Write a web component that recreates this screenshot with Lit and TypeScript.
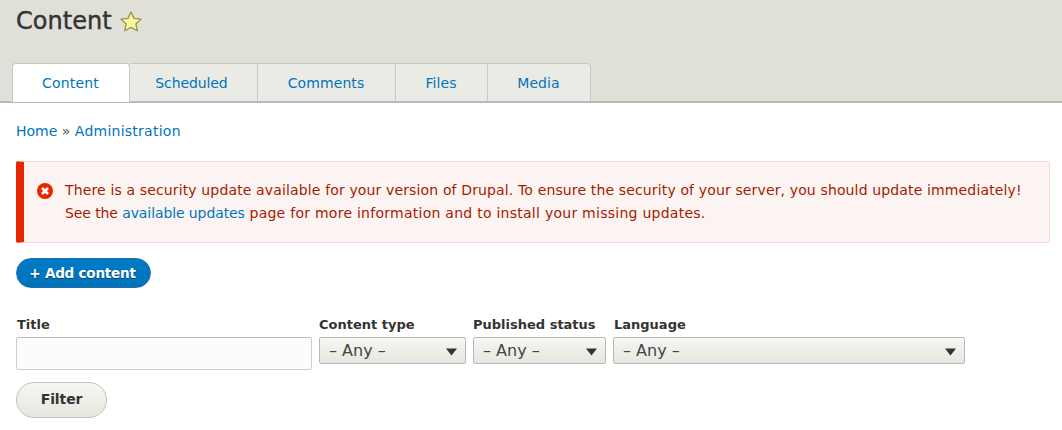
import { LitElement, html, css, svg } from "lit";
import { customElement } from "lit/decorators.js";

const caret = svg`<svg class="caret" width="11" height="8" viewBox="0 0 11 8"><path d="M0 0.5H11L5.5 7.5Z" fill="#333"/></svg>`;

@customElement("app-root")
export class AppRoot extends LitElement {
  static styles = css`
    :host { display: block; width: 1062px; height: 430px; overflow: hidden; background: #fff; font-family: "DejaVu Sans", sans-serif; font-size: 14px; color: #333; }
    * { box-sizing: border-box; }
    a { color: #0074bd; text-decoration: none; }
    .head { height: 103px; background: #e0e0d8; border-bottom: 2px solid #bababa; display: flex; flex-direction: column; justify-content: space-between; padding-left: 12px; }
    .title { display: flex; align-items: center; gap: 8px; padding: 6px 0 0 4px; height: 37px; }
    h1 { margin: 0; font-size: 24px; font-weight: 400; line-height: 27px; letter-spacing: 0.05px; color: #333; -webkit-text-stroke: 0.4px #333; }
    .tabs { display: flex; height: 39px; margin-bottom: -1px; }
    .tab { height: 38px; background: #ebebe5; border: 1px solid #c9c9c2; border-bottom: none; border-left: none; display: flex; align-items: center; justify-content: center; font-size: 14px; letter-spacing: 0.1px; padding-right: 1px; color: #0074bd; }
    .tab.active { background: #fff; height: 39px; border: 1px solid #c9c9c2; border-bottom: none; border-radius: 4px 4px 0 0; padding: 0 1px 1px 0; letter-spacing: 0.2px; }
    .tab.last { border-radius: 0 4px 0 0; }
    .w-content { width: 118px; }
    .tab.w-scheduled { width: 128px; padding-right: 4px; letter-spacing: -0.1px; }
    .w-comments { width: 138px; }
    .w-files { width: 92px; }
    .w-media { width: 103px; }
    .main { padding: 0 12px 0 16px; }
    .crumbs { height: 29px; line-height: 29px; font-size: 14px; margin-top: 14px; color: #555; }
    .crumbs .long { letter-spacing: 0.25px; }
    .msg { margin-top: 15px; width: 1034px; height: 82px; display: flex; background: #fcf4f2; border: 1px solid #f9d9d0; border-left: 8px solid #e62600; border-radius: 2px; padding: 17px 0 0 13px; color: #a51b00; gap: 12px; line-height: 23px; font-size: 14px; letter-spacing: 0.14px; }
    .msg svg { flex: none; margin-top: 4px; }
    .msg .lead, .msg a { letter-spacing: -0.1px; }
    .msg .rest { letter-spacing: 0.26px; }
    .add { display: inline-flex; margin-top: 15px; height: 30px; width: 135px; padding-right: 2px; border-radius: 15px; align-items: center; justify-content: center; color: #fff; font-weight: 700; font-size: 13.5px; letter-spacing: -0.2px; background: linear-gradient(#007bc6, #0071b8); border: 1px solid #1e6fa8; text-shadow: 0 1px 0 rgba(0,0,0,.4); }
    .filters { display: flex; gap: 7px; margin-top: 27px; align-items: flex-start; }
    .field { display: flex; flex-direction: column; }
    .f-title { width: 296px; }
    .f-type { width: 147px; }
    .f-status { width: 133px; }
    .f-lang { width: 352px; }
    label { font-weight: 700; font-size: 13px; line-height: 19px; height: 22px; color: #333; white-space: nowrap; }
    .f-title label, .f-lang label { padding-left: 1px; }
    .input { height: 33px; background: #fcfcfa; border: 1px solid #ccc; border-top-color: #b8b8b8; border-radius: 2px; }
    .select { height: 27px; background: linear-gradient(#f6f6f3, #e7e7df); border: 1px solid #b8b8b8; border-radius: 2px; padding: 0 8px 0 9px; display: flex; justify-content: space-between; align-items: center; font-size: 16px; color: #444; }
    .caret { flex: none; margin-top: 2px; }
    .btn { margin-top: 12px; width: 91px; height: 36px; padding-bottom: 2px; border-radius: 18px; border: 1px solid #c2c2bb; background: linear-gradient(#f6f6f3, #e7e7df); display: flex; align-items: center; justify-content: center; font-weight: 700; font-size: 14px; letter-spacing: -0.1px; color: #333; }
  `;

  render() {
    return html`
      <div class="head">
        <div class="title">
          <h1>Content</h1>
          <svg width="22" height="22" viewBox="0 0 22 22"><path d="M11 1l3 6.4 7 .8-5.2 4.7 1.5 6.9L11 16.4l-6.3 3.4 1.5-6.9L1 8.2l7-.8z" fill="#fdf79c" stroke="#99934e" stroke-width="1.3" stroke-linejoin="round"/></svg>
        </div>
        <div class="tabs">
          <a class="tab active w-content">Content</a>
          <a class="tab w-scheduled">Scheduled</a>
          <a class="tab w-comments">Comments</a>
          <a class="tab w-files">Files</a>
          <a class="tab last w-media">Media</a>
        </div>
      </div>
      <div class="main">
        <div class="crumbs"><a>Home</a> » <a class="long">Administration</a></div>
        <div class="msg">
          <svg width="16" height="16" viewBox="0 0 16 16"><circle cx="8" cy="8" r="8" fill="#e62600"/><path d="M5 5l6 6m0-6l-6 6" stroke="#fff" stroke-width="2.6"/></svg>
          <div>There is a security update available for your version of Drupal. To ensure the security of your server, you should update immediately!<br><span class="lead">See the </span><a>available updates</a><span class="rest"> page for more information and to install your missing updates.</span></div>
        </div>
        <a class="add">+ Add content</a>
        <div class="filters">
          <div class="field f-title"><label>Title</label><div class="input"></div></div>
          <div class="field f-type"><label>Content type</label><div class="select"><span>– Any –</span>${caret}</div></div>
          <div class="field f-status"><label>Published status</label><div class="select"><span>– Any –</span>${caret}</div></div>
          <div class="field f-lang"><label>Language</label><div class="select"><span>– Any –</span>${caret}</div></div>
        </div>
        <div class="btn">Filter</div>
      </div>
    `;
  }
}
